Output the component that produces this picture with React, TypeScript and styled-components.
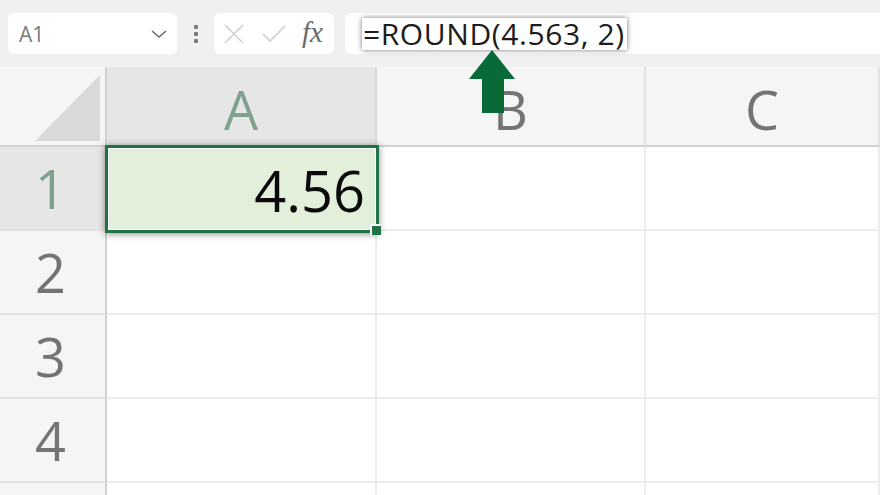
import styled, { createGlobalStyle } from "styled-components"

const GlobalStyle = createGlobalStyle`
    html, body {
        margin: 0;
        padding: 0;
        width: 880px;
        height: 495px;
        overflow: hidden;
        background: #ffffff;
        font-family: "Open Sans", "Noto Sans", sans-serif;
    }
    * { box-sizing: border-box; }
`

const Page = styled.div`
    position: relative;
    width: 880px;
    height: 495px;
    overflow: hidden;
`

const Toolbar = styled.div`
    display: flex;
    align-items: center;
    height: 67px;
    padding: 0 0 0 8px;
    background: #f0f0f0;
`

const NameBox = styled.div`
    display: flex;
    align-items: center;
    justify-content: space-between;
    width: 169px;
    height: 41px;
    padding: 0 9px 0 11px;
    background: #fff;
    border-radius: 6px;
    color: #7a7a7a;
    font-size: 21px;
`

const Dots = styled.div`
    display: flex;
    flex-direction: column;
    gap: 3px;
    margin: 0 16px 0 17px;
    span {
        width: 4px;
        height: 4px;
        border-radius: 1px;
        background: #7a7a7a;
    }
`

const FxBox = styled.div`
    display: flex;
    align-items: center;
    width: 120px;
    height: 41px;
    padding: 0 0 0 9px;
    gap: 16px;
    background: #fff;
    border-radius: 6px;
`

const Fx = styled.span`
    font-family: "Liberation Serif", "DejaVu Serif", serif;
    font-style: italic;
    font-size: 29px;
    color: #6a6a6a;
    margin-left: -1px;
    margin-top: -3px;
`

const FormulaBar = styled.div`
    display: flex;
    align-items: center;
    flex: 1;
    height: 41px;
    margin: 0 -10px 0 11px;
    padding-left: 17px;
    background: #fff;
    border-radius: 6px;
`

const Highlight = styled.span`
    display: inline-block;
    padding: 0 2px 0 1px;
    background: #fff;
    box-shadow: 0 0 5px rgba(0, 0, 0, 0.55);
    color: #1c1c1c;
    font-size: 30px;
    letter-spacing: 0.6px;
    line-height: 32px;
`

const Sheet = styled.div`
    display: grid;
    grid-template-columns: 107px 270px 269px 1fr;
    grid-template-rows: 80px repeat(5, 84px);
`

const Corner = styled.div`
    position: relative;
    background: #f5f5f5;
    border-right: 2px solid #d2d2d2;
    border-bottom: 2px solid #d2d2d2;
    svg { position: absolute; left: 35px; top: 8px; }
`

const ColHead = styled.div<{ $active?: boolean }>`
    display: flex;
    align-items: center;
    justify-content: center;
    padding-top: 6px;
    background: ${p => (p.$active ? "#e6e6e6" : "#f5f5f5")};
    color: ${p => (p.$active ? "#7fa28e" : "#747474")};
    border-right: 2px solid ${p => (p.$active ? "#d8d8d8" : "#e2e2e2")};
    border-bottom: 2px solid #d2d2d2;
    font-size: 54px;
`

const RowHead = styled.div<{ $active?: boolean }>`
    display: flex;
    align-items: center;
    justify-content: center;
    padding-right: 4px;
    background: ${p => (p.$active ? "#e6e6e6" : "#f5f5f5")};
    color: ${p => (p.$active ? "#7fa28e" : "#747474")};
    border-right: 2px solid #d2d2d2;
    border-bottom: 2px solid #e2e2e2;
    font-size: 54px;
`

const Cell = styled.div`
    position: relative;
    border-right: 2px solid #ececec;
    border-bottom: 2px solid #ececec;
`

const Selection = styled.div`
    position: absolute;
    top: -2px;
    left: -2px;
    right: -4px;
    bottom: -4px;
    display: flex;
    align-items: center;
    justify-content: flex-end;
    padding-right: 11px;
    padding-top: 2px;
    background: #e2efda;
    border: 3px solid #217346;
    box-shadow: inset 0 0 0 1px #ffffff, 0 1px 7px rgba(0, 0, 0, 0.45);
    color: #0a0a0a;
    font-size: 56px;
    z-index: 2;
`

const Handle = styled.span`
    position: absolute;
    right: -5px;
    bottom: -5px;
    width: 11px;
    height: 11px;
    background: #217346;
    border-left: 2px solid #fff;
    border-top: 2px solid #fff;
`

const Arrow = styled.svg`
    position: absolute;
    left: 466px;
    top: 48px;
    z-index: 5;
`

const cols = ["A", "B", "C"]
const rows = [1, 2, 3, 4, 5]

const App = () => {
    return (
        <Page>
            <GlobalStyle />
            <Toolbar>
                <NameBox>
                    <span>A1</span>
                    <svg width="18" height="10" viewBox="0 0 18 10">
                        <polyline points="2,2 9,8 16,2" fill="none" stroke="#6a6a6a" strokeWidth="1.6" />
                    </svg>
                </NameBox>
                <Dots><span /><span /><span /></Dots>
                <FxBox>
                    <svg width="22" height="20" viewBox="0 0 22 20">
                        <path d="M2 1 L20 19 M20 1 L2 19" stroke="#cfcfcf" strokeWidth="1.6" fill="none" />
                    </svg>
                    <svg width="26" height="20" viewBox="0 0 26 20">
                        <polyline points="2,10 9,17 24,2" stroke="#cfcfcf" strokeWidth="1.6" fill="none" />
                    </svg>
                    <Fx>fx</Fx>
                </FxBox>
                <FormulaBar>
                    <Highlight>=ROUND(4.563, 2)</Highlight>
                </FormulaBar>
            </Toolbar>

            <Sheet>
                <Corner>
                    <svg width="66" height="66" viewBox="0 0 66 66">
                        <polygon points="65,0 65,66 0,66" fill="#d9d9d9" />
                    </svg>
                </Corner>
                {cols.map(c => (
                    <ColHead key={c} $active={c === "A"}>{c}</ColHead>
                ))}
                {rows.map(r => (
                    <>
                        {/* row 5 only peeks in at the bottom, its number is below the fold */}
                        <RowHead key={"h" + r} $active={r === 1}>{r < 5 ? r : ""}</RowHead>
                        {cols.map(c => (
                            <Cell key={c + r}>
                                {c === "A" && r === 1 && (
                                    <Selection>
                                        4.56
                                        <Handle />
                                    </Selection>
                                )}
                            </Cell>
                        ))}
                    </>
                ))}
            </Sheet>

            <Arrow width="52" height="68" viewBox="0 0 52 68">
                <polygon points="26,2 49,31 38,31 38,65 16,65 16,31 3,31" fill="#086a37" />
            </Arrow>
        </Page>
    )
}

export default App
